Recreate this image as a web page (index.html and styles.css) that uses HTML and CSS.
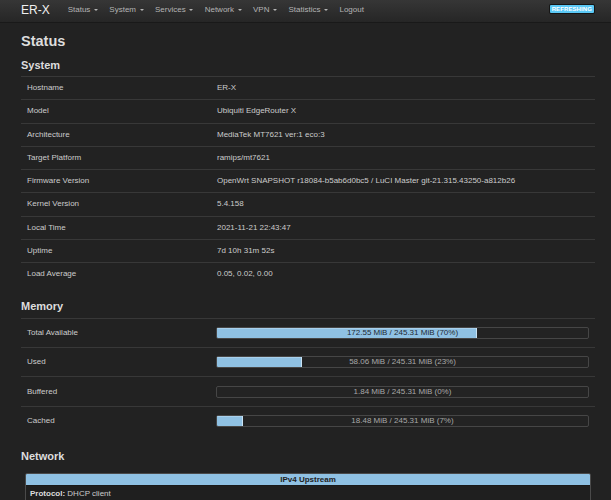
FILE: index.html
```html
<!DOCTYPE html>
<html lang="en">
<head>
<meta charset="utf-8">
<title>ER-X - Status</title>
<link rel="stylesheet" href="styles.css">
</head>
<body>
<header class="topbar">
  <span class="brand">ER-X</span>
  <nav class="menu">
    <span class="menu-item">Status<i class="caret"></i></span>
    <span class="menu-item">System<i class="caret"></i></span>
    <span class="menu-item">Services<i class="caret"></i></span>
    <span class="menu-item">Network<i class="caret"></i></span>
    <span class="menu-item">VPN<i class="caret"></i></span>
    <span class="menu-item">Statistics<i class="caret"></i></span>
    <span class="menu-item">Logout</span>
  </nav>
  <span class="badge">REFRESHING</span>
</header>
<main class="content">
  <h2 class="page-title">Status</h2>

  <h3 class="section-title">System</h3>
  <div class="kv-table">
    <div class="kv-row"><div class="kv-key">Hostname</div><div class="kv-val">ER-X</div></div>
    <div class="kv-row"><div class="kv-key">Model</div><div class="kv-val">Ubiquiti EdgeRouter X</div></div>
    <div class="kv-row"><div class="kv-key">Architecture</div><div class="kv-val">MediaTek MT7621 ver:1 eco:3</div></div>
    <div class="kv-row"><div class="kv-key">Target Platform</div><div class="kv-val">ramips/mt7621</div></div>
    <div class="kv-row"><div class="kv-key">Firmware Version</div><div class="kv-val">OpenWrt SNAPSHOT r18084-b5ab6d0bc5 / LuCI Master git-21.315.43250-a812b26</div></div>
    <div class="kv-row"><div class="kv-key">Kernel Version</div><div class="kv-val">5.4.158</div></div>
    <div class="kv-row"><div class="kv-key">Local Time</div><div class="kv-val">2021-11-21 22:43:47</div></div>
    <div class="kv-row"><div class="kv-key">Uptime</div><div class="kv-val">7d 10h 31m 52s</div></div>
    <div class="kv-row"><div class="kv-key">Load Average</div><div class="kv-val">0.05, 0.02, 0.00</div></div>
  </div>

  <h3 class="section-title section-gap">Memory</h3>
  <div class="kv-table">
    <div class="kv-row mem-row"><div class="kv-key">Total Available</div><div class="kv-val">
      <div class="bar bar-on-fill"><div class="bar-fill" style="width:70%"></div><span class="bar-label">172.55 MiB / 245.31 MiB (70%)</span></div>
    </div></div>
    <div class="kv-row mem-row"><div class="kv-key">Used</div><div class="kv-val">
      <div class="bar"><div class="bar-fill" style="width:23%"></div><span class="bar-label">58.06 MiB / 245.31 MiB (23%)</span></div>
    </div></div>
    <div class="kv-row mem-row"><div class="kv-key">Buffered</div><div class="kv-val">
      <div class="bar"><div class="bar-fill" style="width:0%"></div><span class="bar-label">1.84 MiB / 245.31 MiB (0%)</span></div>
    </div></div>
    <div class="kv-row mem-row"><div class="kv-key">Cached</div><div class="kv-val">
      <div class="bar"><div class="bar-fill" style="width:7%"></div><span class="bar-label">18.48 MiB / 245.31 MiB (7%)</span></div>
    </div></div>
  </div>

  <h3 class="section-title section-gap">Network</h3>
  <div class="net-box">
    <div class="net-head">IPv4 Upstream</div>
    <div class="net-body"><strong>Protocol:</strong> DHCP client</div>
  </div>
</main>
</body>
</html>
```
FILE: styles.css
```css
html, body {
  margin: 0;
  padding: 0;
  background: #222222;
  color: #cccccc;
  font-family: "Liberation Sans", Arial, Helvetica, sans-serif;
  font-size: 8px;
  overflow: hidden;
}

.topbar {
  display: flex;
  align-items: center;
  height: 19px;
  padding: 0 17px 3px 21px;
  background: linear-gradient(#363636, #262626);
  border-bottom: 1px solid #191919;
}

.brand {
  font-size: 12px;
  line-height: 12px;
  color: #f0f0f0;
  margin-right: 18px;
}

.menu {
  display: flex;
  align-items: center;
  gap: 11.4px;
}

.menu-item {
  display: flex;
  align-items: center;
  font-size: 8px;
  line-height: 8px;
  color: #b4b4b4;
}

.caret {
  display: inline-block;
  width: 0;
  height: 0;
  margin-left: 3.6px;
  margin-top: 1px;
  border-top: 2px solid #b4b4b4;
  border-left: 2px solid transparent;
  border-right: 2px solid transparent;
}

.badge {
  margin-left: auto;
  align-self: flex-start;
  margin-top: 5px;
  height: 8px;
  padding: 0 2px;
  background: #5ac8f5;
  color: #ffffff;
  font-size: 6px;
  line-height: 8px;
  font-weight: bold;
  border-radius: 1px;
  box-shadow: 0 0 0 1px #151515;
  letter-spacing: 0.1px;
}

.content {
  padding: 0 16px 0 21px;
}

.page-title {
  margin: 11px 0 0 0;
  font-size: 14.5px;
  line-height: 14.5px;
  font-weight: bold;
  color: #dddddd;
}

.section-title {
  margin: 11px 0 5.5px 0;
  font-size: 11px;
  line-height: 11px;
  font-weight: bold;
  color: #dddddd;
}

.section-gap {
  margin-top: 16px;
}

.kv-table {
  display: flex;
  flex-direction: column;
}

.kv-row {
  display: grid;
  grid-template-columns: 190px 1fr;
  align-items: center;
  box-sizing: border-box;
  height: 23.25px;
  padding: 0 6px;
  border-top: 1px solid #383838;
  line-height: 10px;
}

.mem-row {
  height: 29.33px;
  padding-right: 6px;
}

.kv-key, .kv-val {
  color: #cccccc;
  white-space: nowrap;
}

.bar {
  position: relative;
  box-sizing: border-box;
  height: 12px;
  margin-left: -1px;
  border: 1px solid #464646;
  border-radius: 2px;
  background: #232323;
  overflow: hidden;
}

.bar-fill {
  height: 100%;
  background: #8fc1e3;
  box-shadow: inset -1px 0 0 #c9e2f3, inset 0 1px 0 #a8d0ec;
}

.bar-label {
  position: absolute;
  left: 0;
  right: 0;
  top: 0;
  bottom: 0;
  text-align: center;
  line-height: 10px;
  color: #a8a8a8;
}

.bar-on-fill .bar-label {
  color: #1e2a33;
}

.net-box {
  margin: 11px 4px 0 4px;
  border: 1px solid #4a4a4a;
  border-radius: 2px;
  overflow: hidden;
}

.net-head {
  height: 11px;
  line-height: 11px;
  background: #8fc1e3;
  color: #222222;
  font-weight: bold;
  text-align: center;
  border-bottom: 1px solid #1a1a1a;
}

.net-body {
  padding: 4px 4px 6px 4px;
  line-height: 8px;
  color: #cccccc;
  background: #1f1f1f;
}

.net-body strong {
  color: #dddddd;
}
```
